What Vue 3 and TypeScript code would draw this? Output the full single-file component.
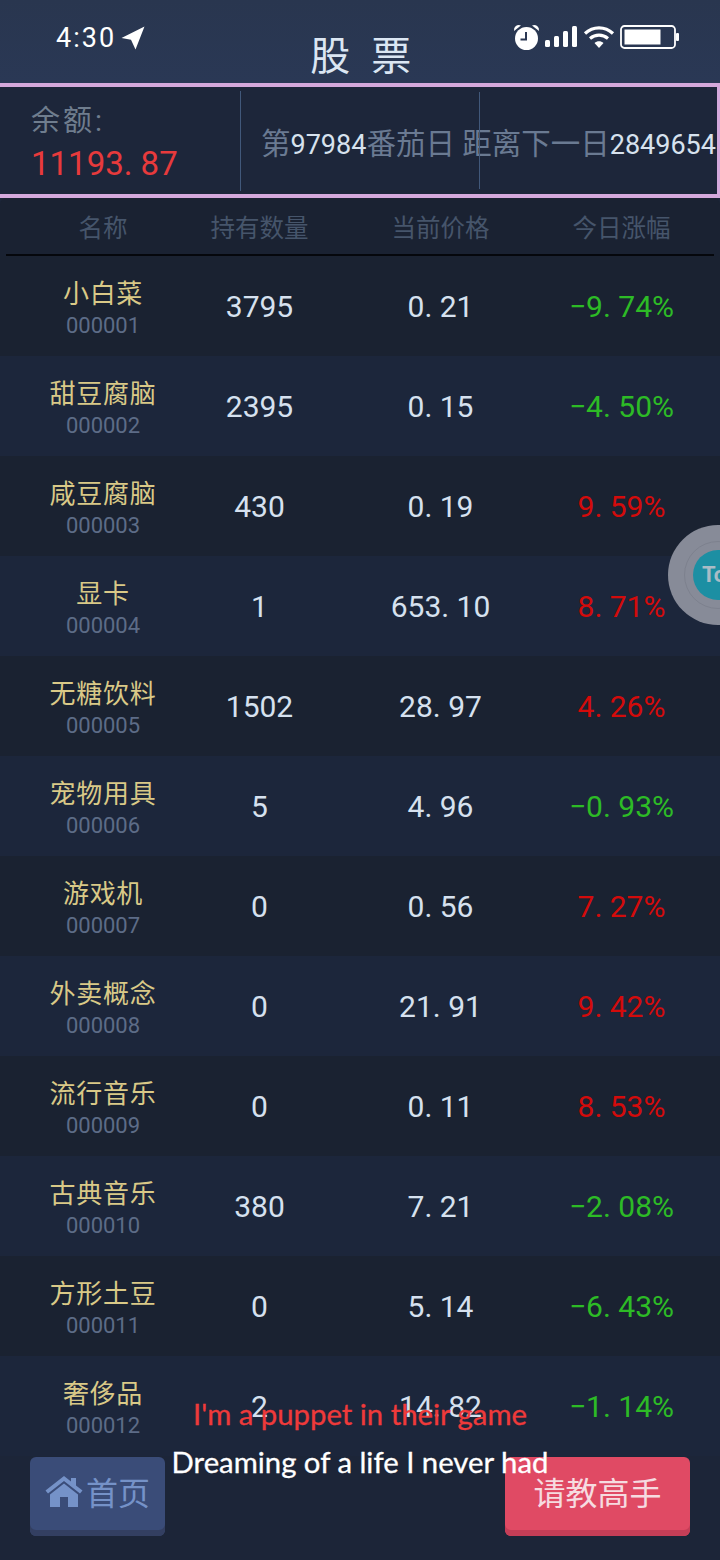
<script setup lang="ts">
// stock list page
interface Stock {
  name: string
  code: string
  qty: string
  price: string
  change: string
}

const stocks: Stock[] = [
  { name: '小白菜', code: '000001', qty: '3795', price: '0. 21', change: '−9. 74%' },
  { name: '甜豆腐脑', code: '000002', qty: '2395', price: '0. 15', change: '−4. 50%' },
  { name: '咸豆腐脑', code: '000003', qty: '430', price: '0. 19', change: '9. 59%' },
  { name: '显卡', code: '000004', qty: '1', price: '653. 10', change: '8. 71%' },
  { name: '无糖饮料', code: '000005', qty: '1502', price: '28. 97', change: '4. 26%' },
  { name: '宠物用具', code: '000006', qty: '5', price: '4. 96', change: '−0. 93%' },
  { name: '游戏机', code: '000007', qty: '0', price: '0. 56', change: '7. 27%' },
  { name: '外卖概念', code: '000008', qty: '0', price: '21. 91', change: '9. 42%' },
  { name: '流行音乐', code: '000009', qty: '0', price: '0. 11', change: '8. 53%' },
  { name: '古典音乐', code: '000010', qty: '380', price: '7. 21', change: '−2. 08%' },
  { name: '方形土豆', code: '000011', qty: '0', price: '5. 14', change: '−6. 43%' },
  { name: '奢侈品', code: '000012', qty: '2', price: '14. 82', change: '−1. 14%' }
]

const columns = ['名称', '持有数量', '当前价格', '今日涨幅']
</script>

<template>
  <div class="page">
    <header class="top">
      <div class="status">
        <div class="status-left">
          <span class="time">4:30</span>
          <svg class="loc" width="24" height="24" viewBox="0 0 24 24">
            <path d="M23.500 0.500 0.500 12l9.500 1.800 4.500 9.700z" fill="#fff" />
          </svg>
        </div>
        <div class="status-right">
          <svg width="27" height="28" viewBox="0 0 27 28">
            <circle cx="13.500" cy="15.500" r="11.500" fill="#fff" />
            <path d="M1 8a5 5 0 0 1 7-5.500zM26 8a5 5 0 0 0-7-5.500z" fill="#fff" />
            <path d="M13 9v7.500H7.500" fill="none" stroke="#2a3753" stroke-width="2" />
          </svg>
          <svg width="33" height="22" viewBox="0 0 33 22">
            <rect x="0" y="14" width="5" height="7" rx="1.500" fill="#fff" />
            <rect x="9" y="10" width="5" height="11" rx="1.500" fill="#fff" />
            <rect x="18" y="5" width="5" height="16" rx="1.500" fill="#fff" />
            <rect x="27" y="0" width="5" height="21" rx="1.500" fill="#fff" />
          </svg>
          <svg width="32" height="24" viewBox="0 0 32 24">
            <path d="M2 8.500c8-7.500 20-7.500 28 0M7 13.500c5.500-4.500 12.500-4.500 18 0" fill="none" stroke="#fff" stroke-width="3.200" />
            <path d="M11.500 18c2.500-2.200 6.500-2.200 9 0L16 23z" fill="#fff" />
          </svg>
          <svg width="60" height="25" viewBox="0 0 60 25">
            <rect x="1" y="1" width="54" height="22" rx="3.500" fill="none" stroke="#fff" stroke-width="1.800" />
            <rect x="4.500" y="4.500" width="36" height="15" fill="#fff" />
            <rect x="56" y="8" width="3" height="8" rx="1" fill="#fff" />
          </svg>
        </div>
      </div>
      <h1 class="title">股 票</h1>
    </header>

    <section class="info">
      <div class="balance">
        <div class="balance-label">余额:</div>
        <div class="balance-value">11193. 87</div>
      </div>
      <div class="ticker">
        <span class="dim">第</span>97984<span class="dim">番茄日 距离下一日</span>28496545
      </div>
      <i class="divider" />
    </section>

    <section class="table">
      <div class="head">
        <span v-for="c in columns" :key="c">{{ c }}</span>
      </div>
      <div v-for="s in stocks" :key="s.code" class="row">
        <div class="name-cell">
          <div class="name">{{ s.name }}</div>
          <div class="code">{{ s.code }}</div>
        </div>
        <div class="num">{{ s.qty }}</div>
        <div class="num">{{ s.price }}</div>
        <div class="change" :class="s.change.startsWith('−') ? 'down' : 'up'">{{ s.change }}</div>
      </div>
    </section>

    <footer class="bottom">
      <button class="btn home">
        <svg width="38" height="32" viewBox="0 0 38 32">
          <path d="M19 1 0.500 15.500 3 18.500 19 6l16 12.500 2.500-3L31 10.500V3h-5v3.500z" fill="#7592c8" />
          <path d="M19 8.500 5 19.500V32h10V22h8v10h10V19.500z" fill="#7592c8" />
        </svg>
        <span>首页</span>
      </button>
      <button class="btn ask">请教高手</button>
    </footer>

    <div class="floater">
      <div class="floater-ring" />
      <div class="floater-core">To</div>
    </div>

    <div class="lyrics">
      <div class="lyric-red">I'm a puppet in their game</div>
      <div class="lyric-white">Dreaming of a life I never had</div>
    </div>
  </div>
</template>

<style scoped>
.page {
  position: relative;
  width: 720px;
  height: 1560px;
  overflow: hidden;
  background: #1c2538;
  font-family: Roboto, "Noto Sans CJK SC", sans-serif;
}

.top {
  position: relative;
  height: 83px;
  background: linear-gradient(#29364f, #2a3855);
  text-align: center;
}

.status {
  position: absolute;
  top: 0;
  left: 0;
  right: 0;
  display: flex;
  justify-content: space-between;
  align-items: flex-start;
  padding: 23px 40px 0 56px;
}

.status-left {
  display: flex;
  align-items: center;
  gap: 5px;
  color: #fff;
  font-size: 27px;
  line-height: 30px;
  letter-spacing: 2px;
}

.status-right {
  display: flex;
  align-items: center;
  gap: 5px;
}

.title {
  margin: 0;
  padding: 33px 0 0 7px;
  color: #dbe6f3;
  font-size: 40px;
  line-height: 48px;
  font-weight: 400;
  letter-spacing: 5.500px;
}

.info {
  position: relative;
  display: flex;
  align-items: center;
  height: 115px;
  box-sizing: border-box;
  border-top: 4px solid #d5a9dc;
  border-bottom: 4px solid #d5a9dc;
  border-right: 3px solid #d5a9dc;
  background: #1d263a;
  overflow: hidden;
}

.balance {
  flex: none;
  width: 241px;
  height: 100px;
  box-sizing: border-box;
  padding: 10px 0 0 31px;
  border-right: 1px solid #41587a;
}

.balance-label {
  color: #6f7d8e;
  font-size: 29px;
  line-height: 40px;
  letter-spacing: 3px;
}

.balance-value {
  margin-top: 2px;
  color: #e73a3c;
  font-size: 33px;
  line-height: 42px;
}

.ticker {
  flex: none;
  padding-left: 20px;
  color: #d7e2ee;
  font-size: 27px;
  white-space: nowrap;
}

.dim {
  color: #6a7a92;
  font-size: 29.500px;
}

.divider {
  position: absolute;
  left: 479px;
  top: 5px;
  width: 1px;
  height: 97px;
  background: #41587a;
}

.table {
  margin-top: -1px;
  border-radius: 8px 8px 0 0;
  background: #1a2232;
  overflow: hidden;
}

.head {
  display: grid;
  grid-template-columns: 132px repeat(3, 181px);
  height: 57px;
  margin: 0 6px 0 6px;
  padding-left: 31px;
  border-bottom: 2px solid #05070c;
  color: #46556b;
  font-size: 24.500px;
  line-height: 64px;
  text-align: center;
}

.row {
  display: grid;
  grid-template-columns: 132px repeat(3, 181px);
  align-items: center;
  height: 100px;
  padding-left: 37px;
  background: #1a2231;
  text-align: center;
}

.row:nth-child(odd) {
  background: #1c263b;
}

.name-cell {
  margin-top: 6px;
}

.name {
  color: #d9c987;
  font-size: 26px;
  line-height: 32px;
  letter-spacing: 0.700px;
  white-space: nowrap;
}

.code {
  margin-top: 2px;
  color: #5d6c87;
  font-size: 22px;
  line-height: 28px;
}

.num {
  margin-top: 1px;
  color: #d6e1ef;
  font-size: 30px;
  line-height: 36px;
}

.change {
  margin-top: 1px;
  font-size: 30px;
  line-height: 36px;
}

.up {
  color: #d30b0b;
}

.down {
  color: #2dbb26;
}

.bottom {
  display: flex;
  justify-content: space-between;
  padding: 1px 30px 0;
}

.btn {
  height: 79px;
  padding: 0 0 12px;
  border: 0;
  border-radius: 6px;
  font-family: inherit;
  font-size: 32px;
}

.home {
  display: flex;
  align-items: center;
  justify-content: center;
  gap: 3px;
  width: 135px;
  background: #3a4c78;
  box-shadow: inset 0 -6px 0 #333f61;
  color: #7592c8;
}

.ask {
  width: 185px;
  background: #e04a64;
  box-shadow: inset 0 -6px 0 #c53e57;
  color: #f6dbe0;
}

.floater {
  position: absolute;
  left: 668px;
  top: 525px;
  width: 100px;
  height: 100px;
  border-radius: 50%;
  background: #878b98;
}

.floater-ring {
  position: absolute;
  inset: 16px;
  border: 1px solid #7d818e;
  border-radius: 50%;
}

.floater-core {
  position: absolute;
  left: 25px;
  top: 25px;
  width: 50px;
  height: 50px;
  border-radius: 50%;
  background: #1c8fa3;
  color: #a9bcc6;
  font-size: 22px;
  font-weight: 700;
  line-height: 50px;
  padding-left: 9px;
  box-sizing: border-box;
}

.lyrics {
  position: absolute;
  left: 0;
  right: 0;
  top: 1395px;
  text-align: center;
  font-family: Lato, sans-serif;
  font-size: 29.300px;
  line-height: 38px;
  -webkit-text-stroke: 0.300px currentColor;
}

.lyric-red {
  color: #ef3a3a;
}

.lyric-white {
  margin-top: 10px;
  color: #fff;
}
</style>
